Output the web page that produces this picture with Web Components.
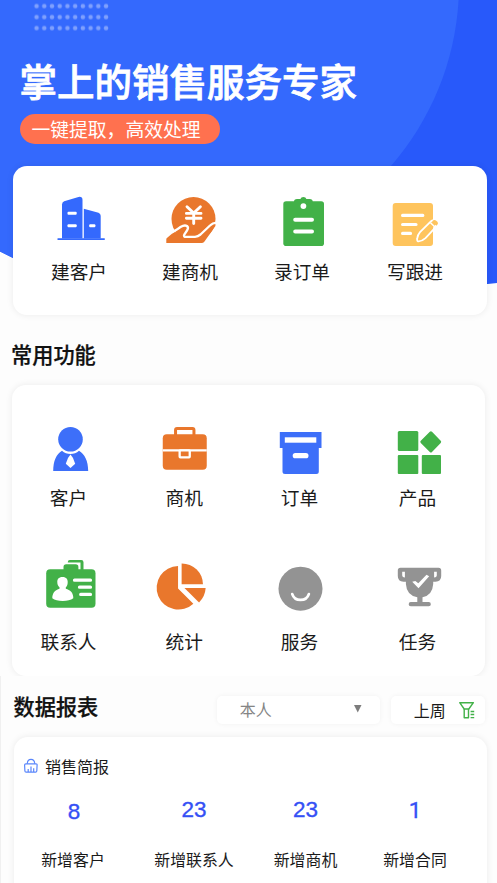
<!DOCTYPE html>
<html lang="zh-CN">
<head>
<meta charset="utf-8">
<title>掌上的销售服务专家</title>
<style>
html,body{margin:0;padding:0}
body{width:497px;height:883px;overflow:hidden;background:#fdfdfd;color:#1a1a1a;font-family:"Noto Sans CJK SC","Liberation Sans",sans-serif}
</style>
</head>
<body>
<sales-app></sales-app>
<script>
const icons = {
  building: `<g fill="#3469fd"><path d="M62 238.5V204.5Q62 202 64.200 201.200L78.500 196.900Q82.500 196.300 82.500 200V238.500Z"/><path d="M83.800 238.500V208.800L98.500 212.700Q100.700 213.500 100.700 215.700V238.500Z"/><rect x="57.300" y="238.200" width="47.700" height="1.800" rx=".9"/></g><g fill="#fff"><rect x="67.500" y="211.700" width="9.200" height="3" rx="1"/><rect x="67.500" y="224.200" width="9.200" height="3" rx="1"/><rect x="89.200" y="224.200" width="6.200" height="3" rx="1"/></g>`,
  yen: `<g fill="#e9772c"><circle cx="193.500" cy="219" r="22"/><path d="M166.300 243V239.200Q166.300 238.200 167.500 237.500L174 232L194 233L212 223.500Q214 222.300 215.400 223.600L215.400 226L204.500 241.500Q203.300 243 201.500 243Z"/></g><path d="M171.500 232.500Q174.500 231.200 180.500 227Q184.500 224.600 187 226Q189 227.600 187 230.500L184.300 234.500Q183 237 186.500 236.900L195 236.800Q198 236.600 200.500 234.500L210 225.500Q212.500 222.900 216.500 222.600" fill="none" stroke="#fff" stroke-width="2.300"/><path d="M187 206.700L193.700 213L200.400 206.700M186.400 213.400H201M186.400 218.300H201M193.700 213V223.500" fill="none" stroke="#fff" stroke-width="2.900" stroke-linecap="round"/>`,
  clipboard: `<g fill="#42b148"><rect x="283.300" y="201.300" width="40.700" height="44.700" rx="2.800"/><path d="M294 204V201.500Q294 199 297 199H300.400Q301 197 303.400 197T306.400 199H309.700Q312.700 199 312.700 201.500V204Z"/></g><circle cx="303.400" cy="206.100" r="2.900" fill="#fff"/><path d="M295.200 219.700H312M295.200 231.400H312" stroke="#fff" stroke-width="4" stroke-linecap="round"/>`,
  note: `<rect x="392.700" y="203" width="40.300" height="43" rx="3" fill="#fec45d"/><path d="M402.600 215.400H422.800M402.600 224.500H416M402.600 233.400H410.500" stroke="#fff" stroke-width="3.200" stroke-linecap="round"/><path d="M418 241.300Q416.800 241 417.200 238.500Q417.600 235 420 232.200L430.600 221.700Q432.500 219.500 434.500 221.300L436.500 223.100Q438 224.700 436.200 226.700L425.500 238.200Q422 241.500 418 241.300Z" fill="#fec45d" stroke="#fff" stroke-width="1.800"/><path d="M433 227.500L438 222L441 226L433 236Z" fill="#fff"/><path d="M430.500 222.800L435.200 227.300" stroke="#fff" stroke-width="1.500"/><path d="M432.200 221.200L433.400 220.200Q434.800 219.400 436.200 220.700L437.400 221.800Q438.600 223.200 437.500 224.500L436.300 225.700Z" fill="#fec45d"/>`,
  person: `<g fill="#3d6ff9"><circle cx="70" cy="439.200" r="12.300"/><path d="M52.700 471C52.800 461 55.700 454 61.500 450.700C66 455 74 455 78.500 450.700C84.300 454 87.600 461 87.700 471Z"/></g><path d="M70 454.400L72.500 458L74.700 463.700L70 468L65.300 463.700L67.500 458Z" fill="#fff"/>`,
  briefcase: `<rect x="175.800" y="428.500" width="18.400" height="10" rx="1.500" fill="none" stroke="#e9772c" stroke-width="3"/><rect x="163" y="434.200" width="44" height="35.500" rx="4" fill="#e9772c"/><path d="M163 450.400H207" stroke="#fff" stroke-width="2.400"/><rect x="179.900" y="450.400" width="10.100" height="6.900" rx=".7" fill="#e9772c" stroke="#fff" stroke-width="2.300"/>`,
  box: `<path d="M279.300 432H321V448H318.300V471.500Q318.300 474 315.800 474H284.500Q282 474 282 471.500V448H279.300Z" fill="#3d6ff9"/><rect x="284.300" y="437.300" width="31.500" height="5.400" fill="#fff"/><rect x="292.200" y="453" width="15.800" height="5.300" rx="2.600" fill="#fff"/>`,
  product: `<g fill="#42b148"><rect x="397.300" y="431" width="20.500" height="20" rx="1.500"/><rect x="397.300" y="455" width="20.500" height="19" rx="1"/><rect x="421.300" y="455" width="19.200" height="19" rx="1"/><path d="M429.300 431.700Q430.400 430.600 431.500 431.700L440.200 440.700Q441.200 441.800 440.200 442.900L431.500 452Q430.400 453 429.300 452L420.300 442.900Q419.200 441.800 420.300 440.700Z"/></g>`,
  contact: `<g fill="#42b148"><rect x="45.700" y="569.300" width="49.300" height="38.500" rx="4"/><path d="M63 571V567Q63 564.300 65.700 564.300H75.200Q77.900 564.300 77.900 567V571Z"/><path d="M67.300 562.500V562Q67.300 560 69.300 560H80.800Q83 560 83 562.300V570H80V562.500Z"/></g><g fill="#fff"><path d="M62 577C66 577 67.300 579.500 67.200 582C67.200 585 66.500 586.200 65.300 587.200V588.700C69.500 589.700 73 592.700 72.800 598.300Q69 601 62.200 601T51.800 598.300C51.800 592.700 55 589.700 59 588.700V587.200C57.500 586 56.800 584.500 56.800 582C56.700 579.500 58 577 62 577Z"/></g><path d="M74 580.200H90M79 587.200H90M80.200 594.400H90" stroke="#fff" stroke-width="3.200" stroke-linecap="round"/>`,
  pie: `<g fill="#e9772c"><path d="M178.300 566V588.500L193.600 603.700A21.800 21.800 0 1 1 178.300 566Z"/><path d="M181.900 563.400A21 20.800 0 0 1 203.200 584.200H181.900Z"/><path d="M184.700 588H205.900A22 22 0 0 1 199.300 602.400Z"/></g>`,
  smile: `<circle cx="300" cy="588.700" r="22" fill="#939393"/><path d="M291.700 594A8.700 8.200 0 0 0 308.400 594" fill="none" stroke="#fff" stroke-width="2.600" stroke-linecap="round"/>`,
  trophy: `<g fill="#939393"><path d="M400 567.700H438Q440.700 567.700 440.700 570.500V576Q440.700 581.700 435 581.700H432.700V584Q432 595.200 422 597.300V602H428.200A2.150 2.150 0 0 1 428.200 606.300H410.300A2.150 2.150 0 0 1 410.300 602H416.800V597.300Q406 595.200 405.400 584V581.700H403Q397.300 581.700 397.300 576V570.500Q397.300 567.700 400 567.700Z"/></g><g fill="#fff"><path d="M401.700 571.700H404.400V577.500Q401.700 577.500 401.700 575.500ZM436.300 571.700H433.600V577.500Q436.300 577.500 436.300 575.500Z"/><path d="M411.700 581.700L414.800 581L417.800 583.300L426 574.800L428.700 576.200L418 588.200Z"/></g>`,
  bag: `<g fill="none" stroke="#5a86fb" stroke-width="1.200"><path d="M25.800 764.800H36Q37.200 764.800 37.100 766L36.800 772Q36.700 773.200 35.600 773.200H26.100Q25 773.200 24.900 772L24.600 766Q24.600 764.800 25.800 764.800Z"/><path d="M27.300 764.800C27.500 759 34.500 759 34.700 764.800"/><path d="M28.200 773V770M31 773V767.500M33.700 773V769.200"/></g>`,
  filter: `<g fill="none" stroke="#42b148" stroke-width="1.400" stroke-linejoin="round"><path d="M459.700 702.700H473.400L468.800 709H464.200Z"/><path d="M464.200 709V717.700H468.500V709"/><path d="M470.600 711.500H474.200M470.600 714.500H474.200M470.600 717.600H474.200"/></g>`
};

const define = (name, build) => customElements.define(name, class extends HTMLElement {
  connectedCallback() {
    if (!this.shadowRoot) this.attachShadow({ mode: 'open' }).innerHTML = build(this);
  }
});

define('app-icon', el => {
  const [, , w, h] = el.getAttribute('box').split(' ');
  return `<style>:host{display:block;flex:none;width:${w}px;height:${h}px}svg{display:block;overflow:visible}</style>
  <svg width="${w}" height="${h}" viewBox="${el.getAttribute('box')}">${icons[el.getAttribute('name')]}</svg>`;
});

define('app-card', () => `<style>
  :host{display:block;box-sizing:border-box;background:#fff;border-radius:14px;box-shadow:0 0 7px rgba(0,0,0,.08)}
</style><slot></slot>`);

define('icon-tile', el => `<style>
  :host{display:flex;flex-direction:column;align-items:center;font-size:18.700px;line-height:26px;white-space:nowrap}
</style><app-icon name="${el.getAttribute('icon')}" box="${el.getAttribute('box')}"></app-icon><slot></slot>`);

define('stat-tile', el => `<style>
  :host{display:flex;flex-direction:column;align-items:center;font-size:15.900px;line-height:24px;white-space:nowrap}
  b{font:400 22.500px/28px "Liberation Sans",sans-serif;color:#3550f5;margin-bottom:24px;-webkit-text-stroke:.35px #3550f5}
  :host([low]) b{padding:2px 0 0 2px;margin-bottom:22px}
  :host([value="1"]) b{font-family:Roboto,sans-serif}
</style><b>${el.getAttribute('value')}</b><slot></slot>`);

define('section-title', () => `<style>
  :host{display:block;font-size:21.200px;line-height:28px;font-weight:500;color:#111;white-space:nowrap;-webkit-text-stroke:.25px #111}
</style><slot></slot>`);

define('hero-banner', () => `<style>
  :host{display:block;position:relative;height:166px;color:#fff}
  .bg{position:absolute;left:0;top:0;z-index:-1}
  .text{padding:55px 0 0 19.500px;display:flex;flex-direction:column;align-items:flex-start}
  h1{margin:0;font-size:37.500px;line-height:50px;font-weight:500;white-space:nowrap;-webkit-text-stroke:.8px #fff}
  .pill{margin-top:9px;height:30px;width:200px;box-sizing:border-box;padding-left:12px;border-radius:15px;background:#ff714f;font-size:18.800px;line-height:29px;white-space:nowrap}
</style>
<svg class="bg" width="497" height="290" viewBox="0 0 497 290">
  <defs><clipPath id="c"><path d="M0 0H497V283Q440 290 330 288Q150 292 13 258L0 251.500Z"/></clipPath>
  <pattern id="d" x="32.700" y=".6" width="7.720" height="11" patternUnits="userSpaceOnUse"><circle cx="3.860" cy="5.500" r="2.200" fill="#7fa0fd"/></pattern></defs>
  <g clip-path="url(#c)"><rect width="497" height="290" fill="#2859fa"/><path d="M0 0H458.600C455 62 431 120 391 166Q350 220 250 290H0Z" fill="#3469fd"/></g>
  <rect x="32.700" y=".6" width="77.200" height="33" fill="url(#d)"/>
</svg>
<div class="text"><h1><slot name="title"></slot></h1><div class="pill"><slot></slot></div></div>`);

define('select-box', () => `<style>
  :host{display:flex;box-sizing:border-box;height:27.500px;width:162.500px;padding:0 18px 0 22.500px;justify-content:space-between;background:#fff;border-radius:5px;box-shadow:0 0 5px rgba(0,0,0,.05);font-size:16px;line-height:26px;color:#858585}
  i{width:8px;height:8px;margin-top:8.500px;background:#7d7d7d;clip-path:polygon(0 0,100% 0,50% 100%)}
</style><slot></slot><i></i>`);

define('period-filter', () => `<style>
  :host{display:flex;box-sizing:border-box;height:27.500px;width:94px;padding-left:23px;gap:12px;align-items:center;background:#fff;border-radius:5px;box-shadow:0 0 5px rgba(0,0,0,.05);font-size:16px;line-height:28px}
</style><slot></slot><app-icon name="filter" box="458 696 18 28"></app-icon>`);

define('sales-app', () => `<style>
  :host{display:block;position:relative;z-index:0;width:497px;height:883px;overflow:hidden}
  .grid{display:grid;width:max-content}
  .quick{margin:0 10px 0 13px;height:149px}
  .quick .grid{grid-template-columns:110px 112px 112px 114px;padding:26px 0 0 11px}
  .features{height:361px;overflow:hidden}
  .features section-title{padding:24.500px 0 0 11px}
  .features app-card{margin:17.500px 12px 0;height:291px}
  .features .grid{grid-template-columns:113px 118.500px 112px 124px;grid-template-rows:144px 120px;padding-top:34px}
  .report{border-left:1px solid #f0f0f0;height:207px;background:#fdfdfd}
  .bar{display:flex;align-items:flex-start;padding:16px 0 0 12.500px;height:45px;box-sizing:border-box}
  .bar select-box{margin:4px 0 0 119px}
  .bar period-filter{margin:4px 0 0 11px}
  .report app-card{margin:16px 10px 0 13px;height:190px}
  .head{display:flex;align-items:center;gap:6px;padding:15px 0 0 9px;font-size:16px;line-height:26px;height:43px;box-sizing:border-box}
  .stats{grid-template-columns:118px 124px 99px 120px;padding-top:15.500px}
</style>
<hero-banner><span slot="title">掌上的销售服务专家</span>一键提取，高效处理</hero-banner>
<app-card class="quick"><div class="grid">
  <icon-tile icon="building" box="39 192 80 66">建客户</icon-tile>
  <icon-tile icon="yen" box="150 192 80 66">建商机</icon-tile>
  <icon-tile icon="clipboard" box="262 192 80 66">录订单</icon-tile>
  <icon-tile icon="note" box="375 192 80 66">写跟进</icon-tile>
</div></app-card>
<div class="features">
  <section-title>常用功能</section-title>
  <app-card><div class="grid">
    <icon-tile icon="person" box="28.500 419 80 65">客户</icon-tile>
    <icon-tile icon="briefcase" box="144.250 419 80 65">商机</icon-tile>
    <icon-tile icon="box" box="259.500 419 80 65">订单</icon-tile>
    <icon-tile icon="product" box="377.500 419 80 65">产品</icon-tile>
    <icon-tile icon="contact" box="28.500 563 80 65">联系人</icon-tile>
    <icon-tile icon="pie" box="144.250 563 80 65">统计</icon-tile>
    <icon-tile icon="smile" box="259.500 563 80 65">服务</icon-tile>
    <icon-tile icon="trophy" box="377.500 563 80 65">任务</icon-tile>
  </div></app-card>
</div>
<div class="report">
  <div class="bar"><section-title>数据报表</section-title><select-box>本人</select-box><period-filter>上周</period-filter></div>
  <app-card>
    <div class="head"><app-icon name="bag" box="23 753 16 28"></app-icon>销售简报</div>
    <div class="grid stats">
      <stat-tile value="8" low>新增客户</stat-tile>
      <stat-tile value="23">新增联系人</stat-tile>
      <stat-tile value="23">新增商机</stat-tile>
      <stat-tile value="1">新增合同</stat-tile>
    </div>
  </app-card>
</div>`);
</script>
</body>
</html>
